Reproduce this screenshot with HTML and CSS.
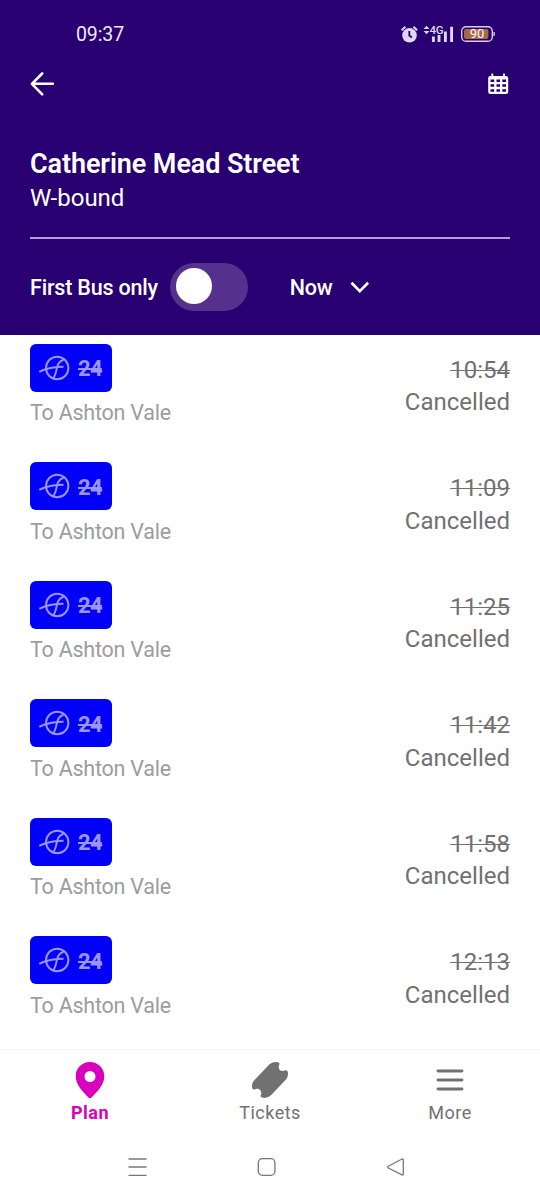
FILE: index.html
```
<!DOCTYPE html>
<html lang="en">
<head>
<meta charset="utf-8">
<title>Catherine Mead Street</title>
<link rel="stylesheet" href="styles.css">
</head>
<body>
<svg class="defs" width="0" height="0" aria-hidden="true">
  <symbol id="first" viewBox="0 0 32 28"><g fill="none" stroke="currentColor" stroke-width="2"><circle cx="18.2" cy="14" r="11.2"/><path d="M.3 17.800C8 14 15 12.800 24.500 12.800M14 24.400C19.500 18 15.500 8.700 24.500 5.800"/></g></symbol>
</svg>
<div class="screen">
  <header class="header">
    <div class="status">
      <span class="clock">09:37</span>
      <svg class="status-icons" width="96" height="20" viewBox="0 0 96 20">
        <circle cx="9.5" cy="11.3" r="7.3" fill="#ded8f0"/>
        <path d="M1.7 6.2 5.4 2.8M13.4 2.8l3.7 3.4" stroke="#ded8f0" stroke-width="2"/>
        <path d="M9.3 7v4.5l2.6 2" stroke="#280071" stroke-width="1.8" fill="none"/>
        <path d="M23.500 5l3-3.200 3 3.200zM23.500 7h6l-3 3.200z" fill="#ded8f0"/>
        <path d="M33.400 12.500V18M39 11V18M45.400 7.500V18M51.600 2.800V18" stroke="#ded8f0" stroke-width="2.900"/>
        <text x="29.500" y="10" class="network">4G</text>
        <rect x="61.700" y="2.700" width="30.600" height="14.600" rx="4.400" fill="#280071" stroke="#d8cfe8" stroke-width="1.400"/>
        <rect x="64" y="4.900" width="24.400" height="10.200" rx="2" fill="#a86842"/>
        <path d="M94.100 8v4" stroke="#d8cfe8" stroke-width="1.400"/>
        <text x="77.100" y="14.400" text-anchor="middle" class="battery">90</text>
      </svg>
    </div>
    <div class="toolbar">
      <svg width="26" height="26" viewBox="0 0 26 26" fill="none" stroke="#fff" stroke-width="2.6" stroke-linecap="round" stroke-linejoin="round"><path d="M12.200 2.500 1.900 12.800l10.300 10.500M1.900 12.800H22.800"/></svg>
      <svg width="22" height="22" viewBox="0 0 22 22"><rect x=".2" y="3" width="20" height="18" rx="2.2" fill="#fff"/><path d="M4.300.6v4M16 .6v4" stroke="#fff" stroke-width="1.800"/><path d="M2.500 6.500h3.700v2.500H2.500zm6 0h3.500v2.500H8.500zm5.800 0h3.700v2.500h-3.700zM2.500 11.300h3.700v2.500H2.500zm6 0h3.500v2.500H8.500zm5.800 0h3.700v2.500h-3.700zM2.500 16.200h3.700v2.500H2.500zm6 0h3.500v2.500H8.500zm5.800 0h3.700v2.500h-3.700z" fill="#280071"/></svg>
    </div>
    <h1 class="title">Catherine Mead Street</h1>
    <p class="subtitle">W-bound</p>
    <div class="filters">
      <span class="filter-label">First Bus only</span>
      <span class="toggle"><span class="knob"></span></span>
      <span class="filter-label">Now</span>
      <svg class="chevron" width="20" height="14" viewBox="0 0 20 14" fill="none" stroke="#fff" stroke-width="2.7"><path d="m1.500 2.800 8.300 8.300 8.300-8.300"/></svg>
    </div>
  </header>
  <main class="list">
    <div class="row"><div><div class="badge"><svg width="32" height="28"><use href="#first"/></svg><s>24</s></div><p class="dest">To Ashton Vale</p></div><div class="times"><s>10:54</s><span>Cancelled</span></div></div>
    <div class="row"><div><div class="badge"><svg width="32" height="28"><use href="#first"/></svg><s>24</s></div><p class="dest">To Ashton Vale</p></div><div class="times"><s>11:09</s><span>Cancelled</span></div></div>
    <div class="row"><div><div class="badge"><svg width="32" height="28"><use href="#first"/></svg><s>24</s></div><p class="dest">To Ashton Vale</p></div><div class="times"><s>11:25</s><span>Cancelled</span></div></div>
    <div class="row"><div><div class="badge"><svg width="32" height="28"><use href="#first"/></svg><s>24</s></div><p class="dest">To Ashton Vale</p></div><div class="times"><s>11:42</s><span>Cancelled</span></div></div>
    <div class="row"><div><div class="badge"><svg width="32" height="28"><use href="#first"/></svg><s>24</s></div><p class="dest">To Ashton Vale</p></div><div class="times"><s>11:58</s><span>Cancelled</span></div></div>
    <div class="row"><div><div class="badge"><svg width="32" height="28"><use href="#first"/></svg><s>24</s></div><p class="dest">To Ashton Vale</p></div><div class="times"><s>12:13</s><span>Cancelled</span></div></div>
  </main>
  <nav class="tabs">
    <div class="tab active">
      <svg width="40" height="40" viewBox="0 0 40 40"><path fill="currentColor" fill-rule="evenodd" d="M20 2C12 2 5.700 8.200 5.700 16.200 5.700 25.500 14 32.500 18.200 37.200a2.400 2.400 0 0 0 3.600 0C26 32.500 34.300 25.500 34.300 16.200 34.300 8.200 28 2 20 2zm0 9a5.500 5.500 0 1 1 0 11 5.500 5.500 0 0 1 0-11z"/></svg>
      <span>Plan</span>
    </div>
    <div class="tab">
      <svg width="40" height="40" viewBox="0 0 40 40"><path fill="currentColor" d="M19.500 4.200Q24 .8 28.500 2.500Q30.200 3.300 29 5.200C27.500 9 31 12.300 34.800 10.600Q37 9.700 37.600 11.500Q39 15.500 36 19.500L21 35.200Q16 39.500 11.500 37.300Q9.800 36.400 11 34.500C12.300 30.600 8.600 27.500 5.300 29.200Q3 30.300 2.400 28.500Q.8 24.500 4 20.500z"/></svg>
      <span>Tickets</span>
    </div>
    <div class="tab">
      <svg width="40" height="40" viewBox="0 0 40 40"><path d="M8 11h24M8 20h24M8 29h24" stroke="currentColor" stroke-width="2.900" stroke-linecap="round"/></svg>
      <span>More</span>
    </div>
  </nav>
  <div class="system">
    <svg width="20" height="20" viewBox="0 0 20 20"><path d="M1.500 2h18M1.500 10h18M1.500 18.300h18"/></svg>
    <svg width="20" height="20" viewBox="0 0 20 20"><rect x="1.300" y="1.700" width="16.600" height="16.600" rx="4"/></svg>
    <svg width="20" height="20" viewBox="0 0 20 20"><path d="M17.300 3v14.200q0 1.300-1.300.7L2.300 11q-1.600-.9 0-1.800L16 2q1.300-.5 1.300 1z"/></svg>
  </div>
</div>
</body>
</html>
```
FILE: styles.css
```
* { box-sizing: border-box; }
body, h1, p { margin: 0; }
body { font-family: Roboto, "Liberation Sans", sans-serif; background: #fff; }
svg { display: block; flex: none; }
.defs { position: absolute; }
.screen { width: 540px; height: 1200px; display: flex; flex-direction: column; overflow: hidden; }
.header { height: 334.5px; flex: none; padding: 0 30px; background: #280071; color: #fff; }
.status { height: 68px; display: flex; align-items: center; justify-content: space-between; padding: 0 14px 0 46px; }
.clock { padding-top: 1px; font-size: 19.5px; letter-spacing: -.1px; color: #eeeaf8; }
.network { font: 500 11.5px Roboto, sans-serif; letter-spacing: -.3px; fill: #ded8f0; stroke: #280071; stroke-width: 1.6px; paint-order: stroke; }
.battery { font: 400 13px Roboto, sans-serif; fill: #fff; }
.toolbar { height: 32px; display: flex; align-items: center; justify-content: space-between; }
.title { margin-top: 48px; font-size: 27px; line-height: 32px; font-weight: 600; letter-spacing: -.1px; white-space: nowrap; }
.subtitle { height: 58.5px; padding-top: 3px; font-size: 24px; line-height: 30px; border-bottom: 2px solid #b3a0d4; }
.filters { height: 96px; display: flex; align-items: center; }
.filter-label { padding-top: 2px; font-size: 21.5px; letter-spacing: -.2px; font-weight: 500; white-space: nowrap; }
.toggle { width: 78px; height: 48px; margin: 0 42px 0 12px; padding: 5.5px 6px; border-radius: 24px; background: #56308d; flex: none; }
.knob { display: block; width: 36px; height: 36px; border-radius: 50%; background: #fff; }
.chevron { margin-left: 17px; }
.list { height: 714px; flex: none; padding-top: 9px; overflow: hidden; }
.row { height: 118.5px; padding: 0 30px; display: flex; justify-content: space-between; }
.badge { width: 81.5px; height: 48px; padding-left: 9px; border-radius: 6px; background: #0000fa; color: #9c94ff; display: flex; align-items: center; gap: 7px; font-size: 22px; letter-spacing: -.7px; font-weight: 700; }
.badge s { padding-top: 2px; text-decoration-thickness: 1.5px; }
.dest { padding-top: 7.5px; font-size: 21.5px; letter-spacing: -.24px; line-height: 28px; color: #9c9ca1; }
.times { padding-top: 10.2px; display: flex; flex-direction: column; align-items: flex-end; font-size: 24px; line-height: 32.6px; color: #717171; }
.times s { text-decoration-thickness: 1.4px; }
.tabs { height: 84px; flex: none; display: grid; grid-template-columns: repeat(3, 1fr); border-top: 1.5px solid #f7f7f7; }
.tab { display: flex; flex-direction: column; align-items: center; padding-top: 10px; color: #717171; font-size: 18px; letter-spacing: .5px; line-height: 26px; }
.active { color: #d800bd; font-weight: 700; }
.system { flex: 1; display: flex; justify-content: space-between; padding: 24px 134px 0 127px; }
.system svg { fill: none; stroke: #777; stroke-width: 1.3; }
```
